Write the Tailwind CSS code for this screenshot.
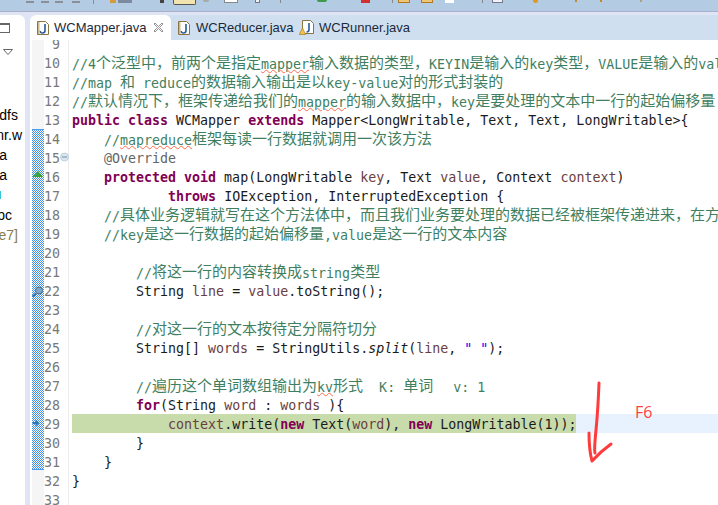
<!DOCTYPE html>
<html lang="en">
<head>
  <meta charset="UTF-8" />
  <title>WCMapper.java</title>
  <script src="https://cdn.jsdelivr.net/npm/@tailwindcss/browser@4"></script>
</head>
<body class="bg-white">
  <div class="relative w-[718px] h-[505px] overflow-hidden bg-[#dfe5f4] font-['Liberation_Sans',sans-serif]">

    <!-- toolbar, only the bottom edge of its icons is in the crop -->
    <div class="h-[12px] bg-[#b3cce4] border-b border-[#a9aecb] flex items-start overflow-hidden">
      <span class="ml-[26px] mt-[1px] w-[8px] h-[2px] bg-[#8a8f98]"></span>
      <span class="ml-[7px] mt-[1px] w-[8px] h-[2px] bg-[#8a8f98]"></span>
      <span class="ml-[6px] mt-[1px] w-[8px] h-[2px] bg-[#8a8f98]"></span>
      <span class="ml-[9px] mt-[1px] w-[8px] h-[2px] bg-[#8a8f98]"></span>
      <span class="ml-[13px] w-[1px] h-[4px] bg-[#8a8f98]"></span>
      <span class="ml-[16px] w-[6px] h-[3px] bg-[#d79a38]"></span>
      <span class="ml-[2px] w-[14px] h-[3px] bg-[#7c8aa0]"></span>
      <span class="ml-[28px] w-[4px] h-[3px] bg-[#444]"></span>
      <span class="ml-[9px] w-[23px] h-[5px] bg-[#f3e3ae] border border-t-0 border-[#555] rounded-b-[2px]"></span>
      <span class="ml-[7px] w-[6px] h-[2px] rounded-b-full bg-[#a9a9a9]"></span>
      <span class="ml-[15px] w-[14px] h-[3px] bg-white border border-t-0 border-[#888]"></span>
      <span class="ml-[17px] w-[5px] h-[3px] bg-[#eef3fa] border border-t-0 border-[#778]"></span>
      <span class="ml-[20px] w-[1px] h-[3px] bg-[#888]"></span>
      <span class="ml-[36px] w-[10px] h-[2px] rounded-b-full bg-[#3c9a4a]"></span>
      <span class="ml-[34px] w-[9px] h-[3px] bg-[#d03030]"></span>
      <span class="ml-[22px] w-[1px] h-[3px] bg-[#888]"></span>
      <span class="ml-[5px] w-[12px] h-[3px] bg-[#eec477] border border-t-0 border-[#b07a20]"></span>
      <span class="ml-[11px] w-[12px] h-[3px] bg-[#eec477] border border-t-0 border-[#b07a20]"></span>
      <span class="ml-[12px] w-[9px] h-[3px] bg-white"></span>
      <span class="ml-[28px] w-[1px] h-[3px] bg-[#888]"></span>
      <span class="ml-[9px] w-[11px] h-[3px] bg-[#eef3fa] border border-t-0 border-[#778]"></span>
      <span class="ml-[30px] w-[5px] h-[3px] rounded-b-full bg-[#e09a20]"></span>
      <span class="ml-[37px] w-[2px] h-[2px] bg-[#c08a30]"></span>
      <span class="ml-[23px] w-[2px] h-[2px] bg-[#c08a30]"></span>
      <span class="ml-[38px] w-[2px] h-[2px] bg-[#b0a080]"></span>
    </div>

    <div class="flex h-[493px] pt-[3px]">
      <!-- package explorer, cut off by the crop -->
      <div class="relative w-[25px] bg-white rounded-tr-[6px] overflow-hidden shrink-0 text-[14px] leading-[20px] text-black">
        <div class="h-[8px]"></div>
        <div class="w-[10px] h-[10px] border border-[#666] border-l-0 border-t-[2px]"></div>
        <svg class="block ml-[3px] mt-[16px]" width="10" height="6" viewBox="0 0 10 6"><path d="M.5.5h9L5 5.500z" fill="#fff" stroke="#666" /></svg>
        <div class="mt-[50px] whitespace-nowrap flex flex-col">
          <div class="flex justify-end pr-[7px]"><span>dfs</span></div>
          <div class="flex justify-end pr-[3px]"><span>nr.w</span></div>
          <div class="flex justify-end pr-[18px]"><span>a</span></div>
          <div class="flex justify-end pr-[18px]"><span>ra</span></div>
          <div class="h-[20px] flex items-center"><span class="w-[1px] h-[8px] bg-[#35c6d8]"></span></div>
          <div class="flex justify-end pr-[13px]"><span>pc</span></div>
          <div class="flex justify-end pr-[7px] text-[#8a7a4a]"><span>e7]</span></div>
        </div>
      </div>

      <!-- editor -->
      <div class="ml-[5px] flex-1 min-w-0 flex flex-col">
        <div class="h-[25px] flex items-end shrink-0 text-[13px] text-[#1a2a3a] bg-[#cfdff0] rounded-tl-[6px]">
          <div class="w-[141px] h-[25px] bg-white rounded-t-[6px] flex items-center pl-[7px] shrink-0">
            <svg width="12" height="14" viewBox="0 0 12 14"><path d="M.5.5h8l3 3v10H.5z" fill="#fff" stroke="#8a7440"/><path d="M1 1h1.500v12H1z" fill="#c9b98f"/><path d="M8 3v6.500Q8 12 5.500 12T3.500 10" fill="none" stroke="#2a5a9a" stroke-width="1.600"/></svg>
            <span class="ml-[5px]">WCMapper.java</span>
            <svg class="ml-[7px]" width="11" height="11" viewBox="0 0 11 11"><path d="M2 1l3.500 3.500L9 1l1 1-3.500 3.500L10 9 9 10 5.500 6.500 2 10 1 9l3.500-3.500L1 2z" fill="#fff" stroke="#777" stroke-width=".8"/></svg>
          </div>
          <div class="flex items-center h-[25px] pl-[7px] w-[121px] shrink-0">
            <svg class="shrink-0" width="12" height="14" viewBox="0 0 12 14"><path d="M.5.5h8l3 3v10H.5z" fill="#fff" stroke="#8a7440"/><path d="M1 1h1.500v12H1z" fill="#c9b98f"/><path d="M8 3v6.500Q8 12 5.500 12T3.500 10" fill="none" stroke="#2a5a9a" stroke-width="1.600"/></svg>
            <span class="ml-[6px]">WCReducer.java</span>
          </div>
          <div class="flex items-center h-[25px] pl-[7px]">
            <svg class="shrink-0" width="15" height="15" viewBox="0 0 15 15"><path d="M3.500.5h8l3 3v10h-11z" fill="#fff" stroke="#8a7440"/><path d="M10 3v6.500Q10 12 7.500 12" fill="none" stroke="#2a5a9a" stroke-width="1.600"/><path d="M3.500 8l3.200 6.500H.3z" fill="#f2c14a" stroke="#a87a20" stroke-width=".7"/></svg>
            <span class="ml-[5px]">WCRunner.java</span>
          </div>
        </div>

        <!-- code -->
        <div class="relative flex-1 bg-white overflow-hidden flex [&_i]:not-italic [&_i]:text-[15px] [&_i]:font-normal [&_i]:font-['Noto_Sans_CJK_SC'] [&_i]:leading-[19px] [&_i]:relative [&_i]:-top-px">
          <!-- overview ruler -->
          <div class="w-[2px] shrink-0 bg-white"></div>
          <div class="w-[12px] shrink-0 flex flex-col bg-[#f5f5f5]">
            <div class="h-[89px]"></div>
            <div class="h-[1px] bg-[#4b9cf0]"></div>
            <svg class="block shrink-0" width="12" height="339" shape-rendering="crispEdges">
              <defs>
                <pattern id="ruler" width="2" height="2" patternUnits="userSpaceOnUse">
                  <rect width="2" height="2" fill="#fff"/>
                  <rect width="1" height="1" fill="#3f8fe6"/>
                  <rect x="1" y="1" width="1" height="1" fill="#3f8fe6"/>
                </pattern>
              </defs>
              <rect width="12" height="339" fill="url(#ruler)"/>
            </svg>
            <div class="h-[1px] bg-[#4b9cf0]"></div>
          </div>
          <div class="w-[25px] shrink-0 -mt-[5px] border-r border-[#ececec] pr-[8px] text-right font-['DejaVu_Sans_Mono',monospace] text-[13.3px] leading-[19px] text-[#787878]">
            <div>9</div><div>10</div><div>11</div><div>12</div><div>13</div><div>14</div><div>15</div><div>16</div><div>17</div><div>18</div><div>19</div><div>20</div><div>21</div><div>22</div><div>23</div><div>24</div><div>25</div><div>26</div><div>27</div><div>28</div><div>29</div><div>30</div><div>31</div><div>32</div><div>33</div>
          </div>
          <div class="flex-1 min-w-0 -mt-[6px] pl-[3px] font-['DejaVu_Sans_Mono',monospace] text-[13.3px] [&>div]:leading-[21px] [&>div]:whitespace-pre [&>div]:h-[19px] text-[#1a1a1a] overflow-hidden">
            <div></div>
            <div class="text-[#3f7f5f]">//4<i>个泛型中，前两个是指定</i><span class="underline decoration-wavy decoration-[#ff6a4a] decoration-1 underline-offset-0">mapper</span><i>输入数据的类型，</i>KEYIN<i>是输入的</i>key<i>类型，</i>VALUE<i>是输入的</i>value</div>
            <div class="text-[#3f7f5f]">//map <i>和</i> reduce<i>的数据输入输出是以</i>key-value<i>对的形式封装的</i></div>
            <div class="text-[#3f7f5f]">//<i>默认情况下，框架传递给我们的</i><span class="underline decoration-wavy decoration-[#ff6a4a] decoration-1 underline-offset-0">mapper</span><i>的输入数据中，</i>key<i>是要处理的文本中一行的起始偏移量</i></div>
            <div><b class="text-[#7f0055]">public class</b> WCMapper <b class="text-[#7f0055]">extends</b> Mapper&lt;LongWritable, Text, Text, LongWritable&gt;{</div>
            <div class="text-[#3f7f5f]">    //<span class="underline decoration-wavy decoration-[#ff6a4a] decoration-1 underline-offset-0">mapreduce</span><i>框架每读一行数据就调用一次该方法</i></div>
            <div class="text-[#646464]">    @Override</div>
            <div>    <b class="text-[#7f0055]">protected void</b> map(LongWritable <span class="text-[#6a3e3e]">key</span>, Text <span class="text-[#6a3e3e]">value</span>, Context <span class="text-[#6a3e3e]">context</span>)</div>
            <div>            <b class="text-[#7f0055]">throws</b> IOException, InterruptedException {</div>
            <div class="text-[#3f7f5f]">    //<i>具体业务逻辑就写在这个方法体中，而且我们业务要处理的数据已经被框架传递进来，在方法的参数中</i></div>
            <div class="text-[#3f7f5f]">    //key<i>是这一行数据的起始偏移量</i>,value<i>是这一行的文本内容</i></div>
            <div></div>
            <div class="text-[#3f7f5f]">        //<i>将这一行的内容转换成</i>string<i>类型</i></div>
            <div>        String <span class="text-[#6a3e3e]">line</span> = <span class="text-[#6a3e3e]">value</span>.toString();</div>
            <div></div>
            <div class="text-[#3f7f5f]">        //<i>对这一行的文本按待定分隔符切分</i></div>
            <div>        String[] <span class="text-[#6a3e3e]">words</span> = StringUtils.<span class="italic">split</span>(<span class="text-[#6a3e3e]">line</span>, <span class="text-[#2a00ff]">" "</span>);</div>
            <div></div>
            <div class="text-[#3f7f5f]">        //<i>遍历这个单词数组输出为</i><span class="underline decoration-wavy decoration-[#ff6a4a] decoration-1 underline-offset-0">kv</span><i>形式</i>  K: <i>单词</i><span class="ml-[20px]">v: 1</span></div>
            <div>        <b class="text-[#7f0055]">for</b>(String <span class="text-[#6a3e3e]">word</span> : <span class="text-[#6a3e3e]">words</span> ){</div>
            <div class="bg-[#e8f2fe] flex"><span class="bg-[#c7dbab]">            <span class="text-[#6a3e3e]">context</span>.write(<b class="text-[#7f0055]">new</b> Text(<span class="text-[#6a3e3e]">word</span>), <b class="text-[#7f0055]">new</b> LongWritable(1));</span></div>
            <div>        }</div>
            <div>    }</div>
            <div>}</div>
          </div>

          <!-- ruler markers: debug/quick-fix icons and the fold toggle -->
          <svg class="absolute left-0 top-0" width="44" height="465" viewBox="30 40 44 465">
            <path d="M32.500 177l5.500-6 5.500 6z" fill="#3fa344"/>
            <circle cx="39" cy="290.500" r="3.500" fill="#7fa8c8" stroke="#4a6a84"/>
            <path d="M36 293.500l-3.500 3" stroke="#2f6c9e" stroke-width="1.800"/>
            <path d="M32.500 422h3v-2.500l4 3.500-4 3.500V424h-3z" fill="#2f78b4"/>
            <circle cx="64.500" cy="157" r="4" fill="#dbe6ee" stroke="#b5c6d4" stroke-width=".8"/>
            <path d="M62 157h5" stroke="#6f8ea6"/>
          </svg>
        </div>
      </div>
    </div>

    <!-- hand-drawn annotation -->
    <svg class="absolute left-0 top-0" width="718" height="505" viewBox="0 0 718 505" fill="none" stroke="#ff3b3b" stroke-width="3" stroke-linecap="round" stroke-linejoin="round">
      <path d="M599 383Q598 410 596 430T595 453"/>
      <path d="M589 433Q589 450 592 461Q600 452 611 444"/>
    </svg>
    <span class="absolute left-[635px] top-[400px] text-[16px] text-[#ff4040] font-['Open_Sans',sans-serif]">F6</span>
  </div>
</body>
</html>
